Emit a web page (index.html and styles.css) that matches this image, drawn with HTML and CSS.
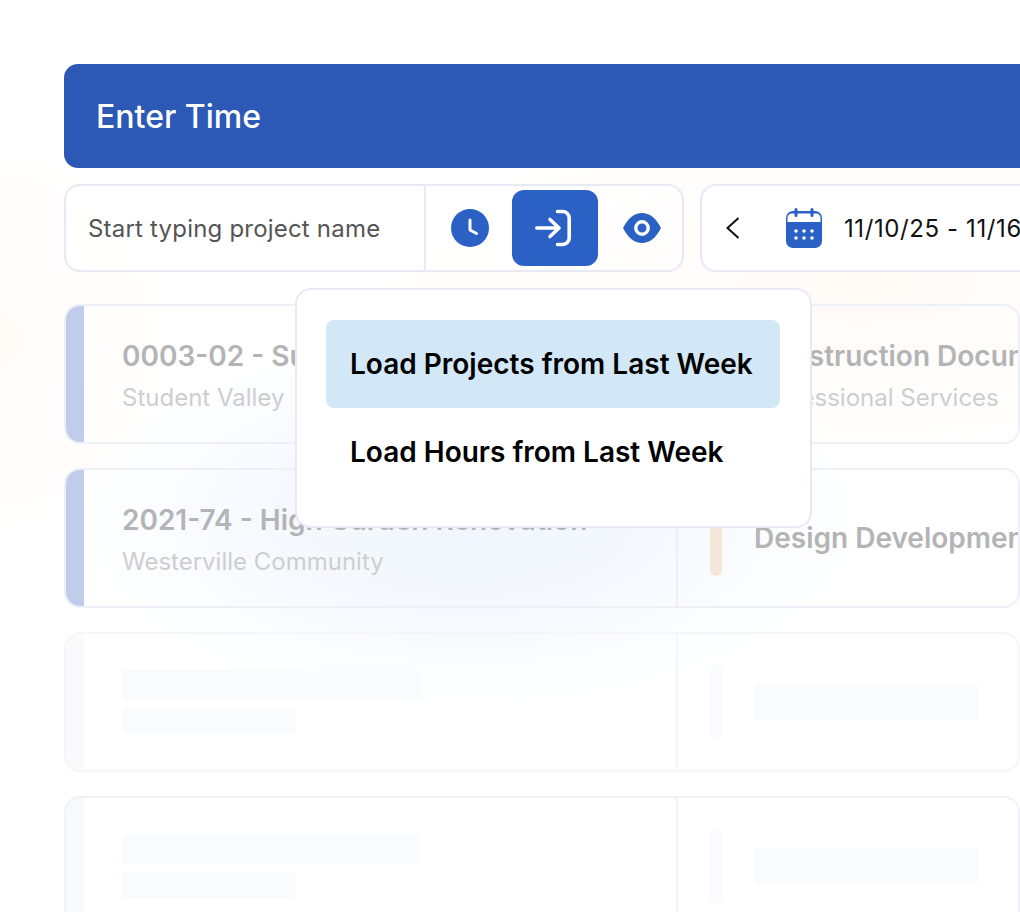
FILE: index.html
```html
<!DOCTYPE html>
<html lang="en">
<head>
<meta charset="utf-8">
<title>Enter Time</title>
<link rel="stylesheet" href="styles.css">
</head>
<body>
<main class="app">
  <header class="title-bar"><h1>Enter Time</h1></header>
  <section class="toolbar">
    <div class="search-box">
      <div class="search-text">Start typing project name</div>
      <div class="mode-group">
        <button class="mode-btn plain" aria-label="Time">
          <svg width="38" height="38" viewBox="0 0 38 38"><circle cx="19" cy="19" r="19" fill="#2b60c4"/><path d="M19 11v10l6.500 3.500" fill="none" stroke="#fff" stroke-width="3" stroke-linecap="round" stroke-linejoin="round"/></svg>
        </button>
        <button class="mode-btn active" aria-label="Load">
          <svg width="42" height="38" viewBox="0 0 42 38"><path d="M2.800 19H25M16 10.500 25 19l-9 8.500M23.500 2.500h5.200a6.500 6.500 0 0 1 6.500 6.500v20a6.500 6.500 0 0 1-6.500 6.500h-5.200" fill="none" stroke="#fff" stroke-width="3.600" stroke-linecap="round" stroke-linejoin="round"/></svg>
        </button>
        <button class="mode-btn plain" aria-label="View">
          <svg width="38" height="30" viewBox="0 0 38 30"><path d="M0 15C5 5 11.500 0 19 0s14 5 19 15c-5 10-11.500 15-19 15S5 25 0 15Z" fill="#2b60c4"/><circle cx="19" cy="15" r="6.200" fill="none" stroke="#fff" stroke-width="3.400"/></svg>
        </button>
      </div>
    </div>
    <div class="date-box">
      <svg class="chev" width="14" height="22" viewBox="0 0 14 22"><path d="M12.500 1 1.500 11l11 10" fill="none" stroke="#111" stroke-width="2"/></svg>
      <svg class="cal" width="36" height="40" viewBox="0 0 36 40"><path d="M7 3h22a7 7 0 0 1 7 7v23a7 7 0 0 1-7 7H7a7 7 0 0 1-7-7V10a7 7 0 0 1 7-7Z" fill="#2b60c4"/><path d="M1.500 14V10A4.500 4.500 0 0 1 6 5.500h24a4.500 4.500 0 0 1 4.500 4.500v4Z" fill="#fff"/><rect x="8.500" y="0" width="3" height="9" rx="1.500" fill="#2b60c4"/><rect x="24.500" y="0" width="3" height="9" rx="1.500" fill="#2b60c4"/><g fill="#fff"><circle cx="10" cy="23" r="1.800"/><circle cx="18" cy="23" r="1.800"/><circle cx="26" cy="23" r="1.800"/><circle cx="10" cy="30" r="1.800"/><circle cx="18" cy="30" r="1.800"/><circle cx="26" cy="30" r="1.800"/></g></svg>
      <span class="date-text">11/10/25 - 11/16/25</span>
    </div>
  </section>
  <section class="rows">
    <article class="row">
      <div class="cell-left"><span class="bar"></span><div class="info"><div class="name">0003-02 - Summit Middle School</div><div class="sub">Student Valley</div></div></div>
      <div class="cell-right"><span class="pill pill-blue"></span><div class="info"><div class="name">Construction Documents</div><div class="sub">Professional Services</div></div></div>
    </article>
    <article class="row">
      <div class="cell-left"><span class="bar"></span><div class="info"><div class="name">2021-74 - High Garden Renovation</div><div class="sub">Westerville Community</div></div></div>
      <div class="cell-right"><span class="pill pill-orange"></span><div class="info"><div class="name">Design Development</div></div></div>
    </article>
    <article class="row row-ghost row-faint">
      <div class="cell-left"><span class="bar"></span><div class="info skeleton-info"><div class="sk sk-long"></div><div class="sk sk-short"></div></div></div>
      <div class="cell-right"><span class="pill"></span><div class="sk sk-right"></div></div>
    </article>
    <article class="row row-ghost">
      <div class="cell-left"><span class="bar"></span><div class="info skeleton-info"><div class="sk sk-long"></div><div class="sk sk-short"></div></div></div>
      <div class="cell-right"><span class="pill"></span><div class="sk sk-right"></div></div>
    </article>
  </section>
  <div class="menu">
    <div class="menu-item selected">Load Projects from Last Week</div>
    <div class="menu-item">Load Hours from Last Week</div>
  </div>
</main>
</body>
</html>
```
FILE: styles.css
```css
* { box-sizing: border-box; }
html, body { margin: 0; height: 100%; overflow: hidden; }
body {
  font-family: "Inter", "Liberation Sans", sans-serif;
  background-color: #fff;
  background-image:
    radial-gradient(ellipse 400px 190px at 470px 520px, #f0f6fd 0%, rgba(240,246,253,.65) 50%, rgba(240,246,253,0) 100%),
    radial-gradient(ellipse 180px 200px at 0px 340px, #fffbf7 0%, rgba(255,251,247,0) 100%),
    radial-gradient(ellipse 520px 170px at 860px 285px, #fffaf6 0%, rgba(255,250,246,0) 100%);
  background-repeat: no-repeat;
}
.app { position: relative; width: 956px; margin: 64px 0 0 64px; }

.title-bar {
  width: 1100px; height: 104px; padding-left: 32px;
  display: flex; align-items: center;
  background: #2b59b5; border-radius: 14px;
}
.title-bar h1 { margin: 0; font-size: 32px; font-weight: 500; color: #fff; }

.toolbar { display: flex; gap: 16px; margin-top: 16px; width: 1100px; }
.search-box, .date-box {
  height: 88px; border: 2px solid #e9e9f5; border-radius: 16px;
  background: rgba(255,255,255,.6);
  display: flex; align-items: center;
}
.search-box { width: 620px; flex: none; }
.search-text { width: 358px; flex: none; padding-left: 22px; font-size: 24px; letter-spacing: .2px; color: #555; }
.mode-group {
  height: 84px; flex: none; width: 258px; border-left: 2px solid #e9e9f5;
  display: grid; grid-template-columns: 86px 86px 84px; align-items: center;
}
.mode-btn {
  width: 86px; height: 76px; padding: 0; border: 0; background: none; border-radius: 12px;
  display: flex; align-items: center; justify-content: center;
}
.mode-btn.plain { padding-left: 2px; }
.mode-btn.active { background: #2b60c4; }
.date-box { flex: 1; padding-left: 24px; background: #fff; }
.chev { flex: none; }
.cal { flex: none; margin-left: 46px; }
.date-text { margin-left: 22px; font-size: 24px; letter-spacing: .6px; color: #111; white-space: nowrap; }

.rows { display: flex; flex-direction: column; gap: 24px; margin-top: 32px; height: 640px; }
.row {
  flex: none; height: 140px; display: flex; overflow: hidden;
  border: 2px solid #eef0f7; border-radius: 16px;
}
.cell-left { width: 612px; flex: none; display: flex; border-right: 2px solid #eef0f7; }
.bar { width: 18px; flex: none; background: #bfcdea; }
.info { padding-left: 38px; display: flex; flex-direction: column; justify-content: center; white-space: nowrap; min-width: 0; }
.name { font-size: 28px; font-weight: 600; color: #b3b4b5; line-height: 36px; }
.sub { font-size: 24px; color: #cdced0; line-height: 32px; margin-top: 8px; margin-bottom: -4px; }
.cell-right { flex: 1; display: flex; align-items: center; padding-left: 32px; min-width: 0; }
.cell-right .info { padding-left: 32px; }
.pill { width: 12px; height: 76px; flex: none; border-radius: 6px; background: #fafbfe; }
.pill-blue { background: #bfcdea; }
.pill-orange { background: #f5e6da; }

.row-ghost { border-color: #f1f1f7; }
.row-ghost .cell-left { border-right-color: #f1f1f7; }
.row-ghost .bar { background: #f8f9fd; }
.row-faint { border-color: #f6f6f9; }
.row-faint .cell-left { border-right-color: #f6f6f9; }
.row-faint .bar { background: #fafafc; }
.skeleton-info { gap: 8px; }
.sk { background: #fafbfe; border-radius: 4px; }
.sk-long { width: 298px; height: 30px; }
.sk-short { width: 174px; height: 26px; }
.sk-right { width: 224px; height: 36px; margin-left: 32px; }

.menu {
  position: absolute; left: 231px; top: 224px;
  width: 517px; height: 240px; padding: 30px 30px 30px 29px;
  background: #fff; border: 2px solid #e9e9f5; border-radius: 16px;
}
.menu-item {
  height: 88px; display: flex; align-items: center; padding-left: 24px;
  font-size: 28px; font-weight: 600; color: #000; border-radius: 8px; white-space: nowrap;
}
.menu-item.selected { background: #d3e8f7; }
```
